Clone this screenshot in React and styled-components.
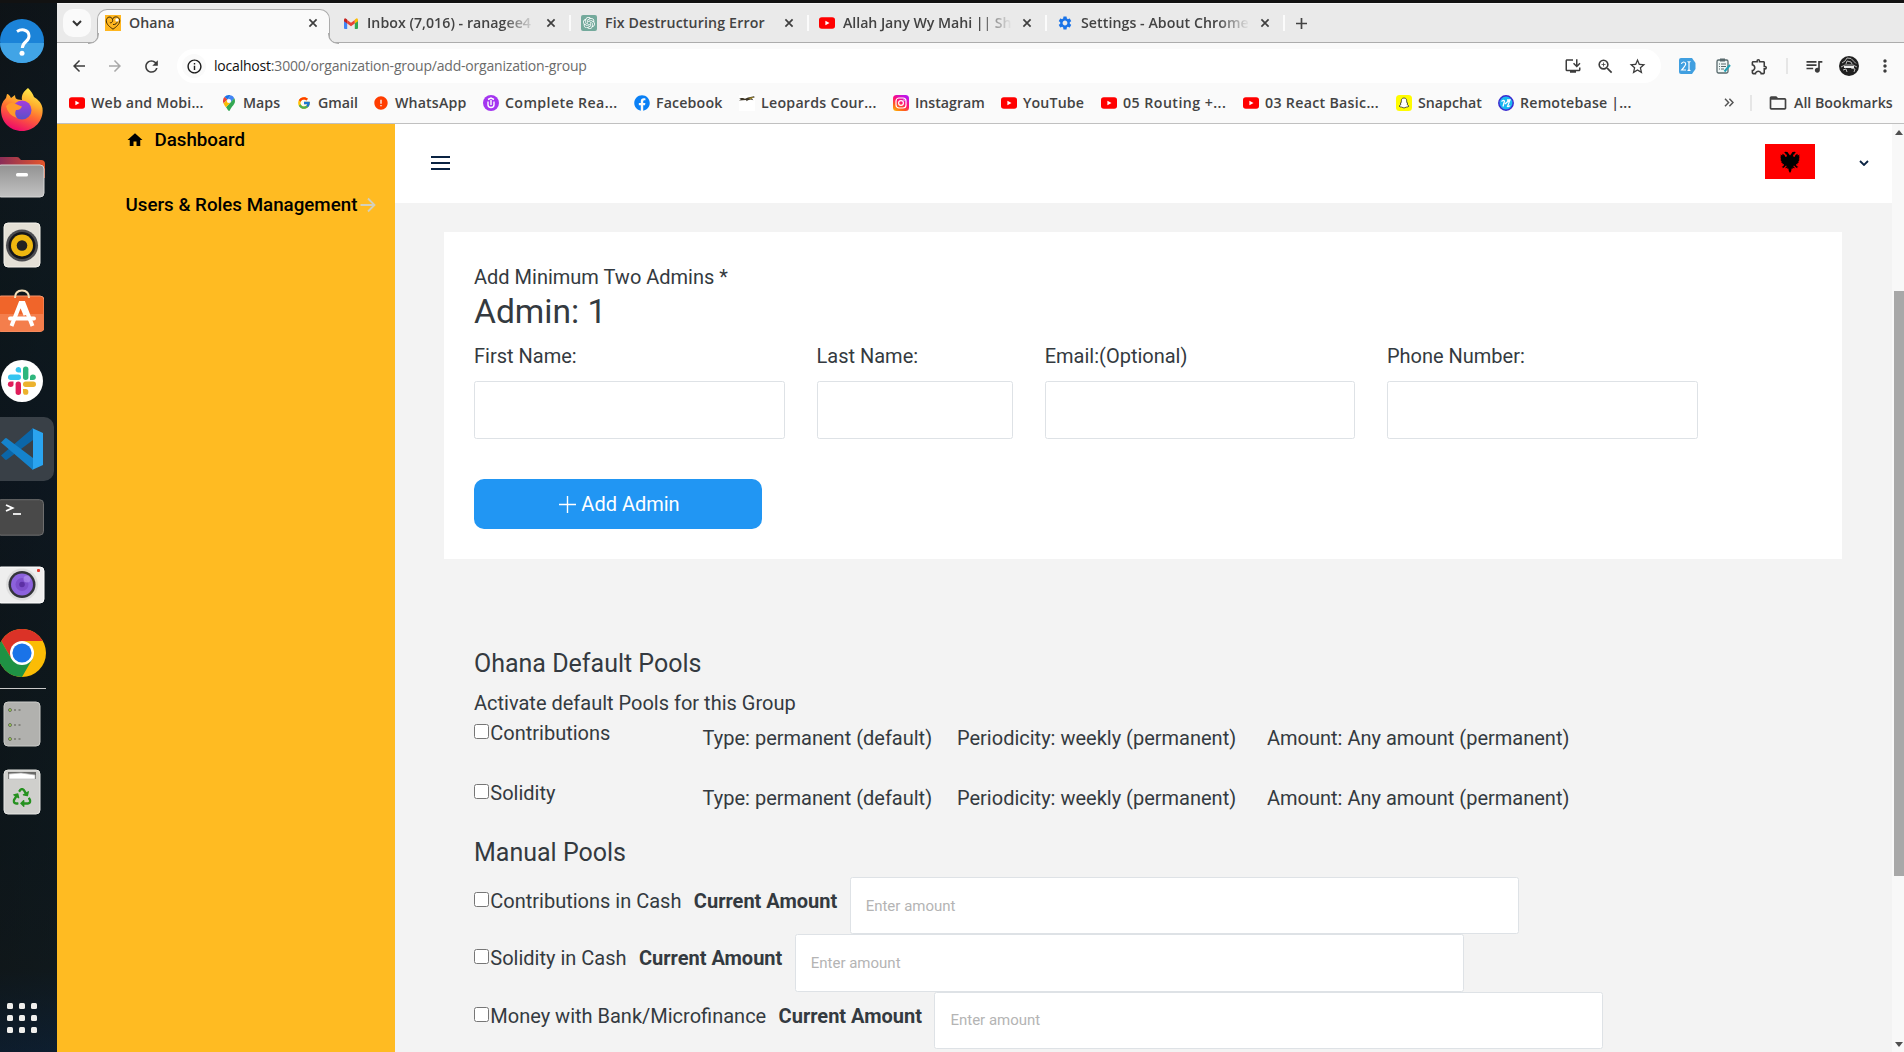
import React from "react";
import styled, { createGlobalStyle } from "styled-components";
import {
  MdArrowBack, MdArrowForward, MdRefresh, MdInfoOutline, MdStarBorder, MdOutlineExtension, MdQueueMusic,
  MdMoreVert, MdOutlineInstallDesktop, MdZoomIn, MdFolderOpen, MdSettings, MdHome, MdError,
} from "react-icons/md";
import { FcGoogle } from "react-icons/fc";
import { SiOpenai } from "react-icons/si";
import { FaFacebook, FaRecycle } from "react-icons/fa";

const ui = `"Open Sans", "Noto Sans", sans-serif`;
const app = `Roboto, "Liberation Sans", sans-serif`;

const Global = createGlobalStyle`
  * { box-sizing: border-box; }
  body { margin: 0; overflow: hidden; background: #0e0e0e; }
  svg { display: block; flex: none; }
`;

/* ---------- desktop ---------- */
const Desktop = styled.div`
  width: 1904px;
  height: 1052px;
  padding-top: 3px;
  display: flex;
  overflow: hidden;
  background: #121212;
`;
const Dock = styled.nav`
  width: 57px;
  flex: none;
  padding-top: 4px;
  display: flex;
  flex-direction: column;
  background: linear-gradient(100deg, rgba(14, 16, 18, 0.55), rgba(16, 30, 40, 0.45)),
    linear-gradient(180deg, #0d161c 0, #0f1d26 14%, #0b1a20 30%, #0b1622 45%, #0c1518 62%, #0c1416 80%, #101514 92%, #0c1f36 100%);
`;
const DockSlot = styled.div`
  width: 54px;
  height: 68px;
  display: flex;
  align-items: center;
`;
const DockTile = styled.div`
  width: 54px;
  height: 64px;
  display: flex;
  align-items: center;
  border-radius: 0 10px 10px 0;
  background: ${(p) => (p.$active ? "#394047" : "transparent")};
`;
const DockLine = styled.div`
  width: 46px;
  height: 1px;
  margin: 1px 0;
  background: #c9c9c9;
`;
const AppsGrid = styled.div`
  margin: auto 0 19px 7px;
  display: grid;
  grid-template-columns: repeat(3, 6px);
  grid-auto-rows: 6px;
  gap: 6px;
`;
const AppsDot = styled.i`
  border-radius: 1.5px;
  background: #f0efec;
`;

/* ---------- browser chrome ---------- */
const Browser = styled.div`
  flex: 1;
  min-width: 0;
  display: flex;
  flex-direction: column;
  background: #fafafa;
  color: #434343;
  font: 600 14.2px/20px ${ui};
`;
const TabStrip = styled.div`
  height: 40px;
  flex: none;
  padding-left: 6px;
  display: flex;
  background: #eaeaea;
  border-bottom: 1px solid #acacac;
  border-top: 1px solid #f4f4f4;
`;
const TabSearch = styled.div`
  width: 28px;
  height: 28px;
  margin: 5px 3px 0 0;
  display: grid;
  place-items: center;
  border-radius: 10px;
  background: #fafafa;
`;
const Tab = styled.div`
  position: relative;
  width: 238px;
  height: 32px;
  margin-top: 3px;
  padding: 0 14px 0 11px;
  display: flex;
  align-items: center;
  gap: 8px;
`;
const TabBody = styled.div`
  position: absolute;
  inset: 2px 2px -5px 3px;
  border: 1px solid #acacac;
  border-bottom: none;
  border-radius: 10px 10px 0 0;
  background: #fafafa;
  &::before,
  &::after {
    content: "";
    position: absolute;
    bottom: 0;
    width: 10px;
    height: 10px;
    border-bottom: 1px solid #acacac;
  }
  &::before {
    left: -10px;
    border-right: 1px solid #acacac;
    border-bottom-right-radius: 10px;
    box-shadow: 3px 3px 0 0 #fafafa;
    clip-path: inset(0);
  }
  &::after {
    right: -10px;
    border-left: 1px solid #acacac;
    border-bottom-left-radius: 10px;
    box-shadow: -3px 3px 0 0 #fafafa;
    clip-path: inset(0);
  }
`;
const TabIcon = styled.div`
  position: relative;
  width: 16px;
  display: grid;
  place-items: center;
`;
const TabTitle = styled.div`
  position: relative;
  width: 168px;
  overflow: hidden;
  white-space: nowrap;
  letter-spacing: ${(p) => p.$ls || 0}px;
  ${(p) => p.$fade && "mask-image: linear-gradient(90deg, #000 136px, transparent 169px);"}
`;
const TabClose = styled.div`
  position: relative;
  margin-left: auto;
`;
const TabRule = styled.i`
  position: absolute;
  right: -1px;
  top: 8px;
  width: 2px;
  height: 16px;
  background: #fbfbfb;
`;
const NewTab = styled.div`
  width: 34px;
  height: 38px;
  display: grid;
  place-items: center;
`;
const Toolbar = styled.div`
  height: 46px;
  flex: none;
  display: flex;
  align-items: center;
  padding: 0 3px 0 12px;
  color: #3c3c3c;
`;
const ToolButton = styled.div`
  width: ${(p) => p.$w || 36}px;
  flex: none;
  display: grid;
  place-items: center;
  color: ${(p) => p.$color || "inherit"};
`;
const Omnibox = styled.div`
  width: 1484px;
  height: 34px;
  flex: none;
  display: flex;
  align-items: center;
  padding: 0 8px 0 5px;
  border-radius: 17px;
  background: #fff;
`;
const SiteInfo = styled.div`
  width: 24px;
  height: 24px;
  display: grid;
  place-items: center;
  border-radius: 12px;
  background: #fafafa;
  color: #1b1b1b;
`;
const Url = styled.div`
  flex: 1;
  padding-left: 8px;
  color: #6b6b6b;
  font: 400 14px/20px ${ui};
  letter-spacing: -0.2px;
  b { font-weight: 400; color: #111; }
`;
const ToolRule = styled.i`
  width: 2px;
  height: 16px;
  flex: none;
  background: #e6e6e6;
`;
const Avatar = styled.div`
  width: 20px;
  height: 20px;
  flex: none;
  margin-right: 10px;
  overflow: hidden;
  border-radius: 50%;
  background: #202020;
`;
const Bookmarks = styled.div`
  height: 35px;
  flex: none;
  padding: 0 11px 7px 12px;
  display: flex;
  align-items: center;
  gap: 17px;
  border-bottom: 1px solid #c0c0c0;
`;
const Bookmark = styled.div`
  display: flex;
  align-items: center;
  gap: 6px;
`;
const BookmarkIcon = styled.div`
  width: 16px;
  height: 16px;
  display: grid;
  place-items: center;
`;
const BookmarkText = styled.div`
  width: ${(p) => p.$w}px;
  white-space: nowrap;
  letter-spacing: ${(p) => p.$ls || 0}px;
`;
const BookmarkEnd = styled.div`
  margin-left: auto;
  display: flex;
  align-items: center;
`;

/* ---------- web page ---------- */
const Page = styled.div`
  flex: 1;
  min-height: 0;
  display: flex;
  overflow: hidden;
  background: #f3f3f3;
  color: #343a40;
  font: 400 20px/30px ${app};
`;
const Sidebar = styled.aside`
  width: 338px;
  flex: none;
  display: flex;
  flex-direction: column;
  background: #ffbb22;
  color: #000;
  font-weight: 500;
  font-size: 18.75px;
  line-height: 22px;
`;
const SideItem = styled.div`
  display: flex;
  align-items: center;
  white-space: nowrap;
  padding-left: ${(p) => p.$left}px;
  margin-top: ${(p) => p.$top}px;
  gap: ${(p) => p.$gap}px;
`;
const Main = styled.main`
  flex: 1;
  min-width: 0;
  display: flex;
  flex-direction: column;
`;
const Header = styled.header`
  height: 79px;
  flex: none;
  padding: 0 23px 2px 36px;
  display: flex;
  align-items: center;
  background: #fff;
`;
const Burger = styled.div`
  width: 19px;
  display: grid;
  grid-auto-rows: 2px;
  gap: 4px;
`;
const BurgerLine = styled.i`
  background: #0a2342;
`;
const Flag = styled.div`
  width: 50px;
  height: 35px;
  margin: 0 44px 2px auto;
  display: grid;
  place-items: center;
  background: #f00;
  color: #000;
`;
const Card = styled.section`
  width: 1398px;
  height: 327px;
  flex: none;
  margin: 29px 0 0 49px;
  padding: 30px;
  background: #fff;
`;
const AdminTitle = styled.h2`
  margin: 0 0 10px;
  font-weight: 400;
  font-size: 33.6px;
  line-height: 39px;
`;
const Fields = styled.div`
  display: flex;
  gap: 31.5px;
`;
const Field = styled.label`
  width: ${(p) => p.$w}px;
  display: flex;
  flex-direction: column;
  gap: 10px;
  white-space: nowrap;
`;
const Input = styled.input`
  width: ${(p) => (p.$w ? p.$w + "px" : "100%")};
  height: ${(p) => (p.$w ? 57.3 : 58)}px;
  padding: 0 15px;
  border: 1px solid #dee2e6;
  border-radius: 2.5px;
  background: #fff;
  font: 400 15px/22px ${app};
  &::placeholder { color: #b4b4b4; opacity: 1; }
`;
const AddButton = styled.button`
  width: 288px;
  height: 50px;
  margin-top: 40px;
  padding: 0 0 0 3px;
  display: flex;
  align-items: center;
  justify-content: center;
  gap: 5px;
  border: none;
  border-radius: 10px;
  background: #2196f3;
  color: #fff;
  font: 400 20px/30px ${app};
`;
const Pools = styled.section`
  padding: 90px 0 0 79px;
`;
const PoolsTitle = styled.h4`
  margin: 0 0 9px;
  font-weight: 400;
  font-size: 25px;
  line-height: 30px;
`;
const PoolRow = styled.div`
  height: 60px;
  display: grid;
  grid-template-columns: 228.6px 254.4px 310px auto;
  align-items: start;
`;
const Check = styled.label`
  display: flex;
  align-items: flex-start;
  gap: 1.3px;
  white-space: nowrap;
  padding-top: ${(p) => p.$top || 0}px;
`;
const Box = styled.input`
  width: 15px;
  height: 15px;
  margin: 6px 0 0;
`;
const PoolInfo = styled.div`
  padding-top: 5px;
  white-space: nowrap;
`;
const ManualRow = styled.div`
  height: 57.3px;
  display: flex;
  gap: 12.4px;
`;
const Current = styled.b`
  padding-top: 9px;
  font-weight: 700;
  white-space: nowrap;
`;
const Scrollbar = styled.div`
  width: 12px;
  flex: none;
  display: flex;
  flex-direction: column;
  align-items: flex-end;
  background: #f8f8f8;
`;
const ScrollArrow = styled.div`
  width: 10px;
  height: 16px;
  display: grid;
  place-items: center;
`;
const Thumb = styled.div`
  width: 10px;
  height: 585px;
  margin: 151px 0 auto;
  background: #a8a8a8;
`;

/* ---------- small drawings ---------- */
const Cross = () => (
  <svg width="10" height="10" viewBox="0 0 10 10" stroke="#3f3f3f" strokeWidth="1.7"><path d="M1.4 1.4l7.2 7.2M8.6 1.4L1.4 8.6" /></svg>
);
const Plus = ({ size, weight }) => (
  <svg width={size} height={size} viewBox="0 0 17 17" stroke="currentColor" strokeWidth={weight}><path d="M8.500 0v17M0 8.500h17" /></svg>
);
const Eagle = () => (
  <svg width="20" height="22" viewBox="0 0 20 22">
    {["", "translate(20 0) scale(-1 1)"].map((t) => (
      <path key={t} transform={t} d="M10 4.500L8.500 2.500 7.500 1 5 .8l-.8 1 1.600.4-1 .8 1.700.5.5 1.700L5.500 6 4.500 4 2.500 2.800 2.300 4.500.3 3.500l.9 2-1.200.3 1.200 1.400L.2 8l1.200 1-.9.8 1.400.9-.8 1 1.600.3-.4 1.300 1.600-.4L3.500 15l-2 1 1.400.3-.4 1 1.500-.7L6 14.500l.8.800-1.300 1 .2 1.200 1.500-1 .3 1.500.9-.5.4 2.500L10 22z" fill="#000" />
    ))}
  </svg>
);
const YouTube = () => (
  <svg width="16" height="16" viewBox="0 0 16 16"><rect y="2.2" width="16" height="11.6" rx="2.8" fill="#f00" /><path d="M6.400 5.700v4.600L10.500 8z" fill="#fff" /></svg>
);
const Ohana = () => (
  <svg width="16" height="16" viewBox="0 0 16 16" fill="none" stroke="#2b1c05">
    <rect width="16" height="16" fill="#ffb61f" stroke="none" />
    <path d="M8 14.200C5 12 1.300 9.500 1.300 5.700c0-4 5-5.200 6.200-1.200.7 2.300-1.300 4-2.600 3M7.500 4.500c1-4 7.200-3.300 7.200 1.200 0 3.800-3.700 6.300-6.700 8.500M8 9.500c2.500.4 4.500-1.300 4.300-4" strokeWidth="0.9" />
    <circle cx="12" cy="5" r="1.700" fill="#fff" stroke="none" />
  </svg>
);
const GmailIcon = () => (
  <svg width="14" height="11" viewBox="0 0 14 11">
    <path d="M0 2v8q0 1 1 1h2.200V4z" fill="#4285f4" /><path d="M14 2v8q0 1-1 1h-2.200V4z" fill="#34a853" />
    <path d="M3.200 2v3.500L7 8.300l3.800-2.800V2L7 4.800z" fill="#ea4335" /><path d="M0 2Q0 0 1.700.4L3.200 1.500v4L0 3.200z" fill="#c5221f" /><path d="M14 2q0-2-1.700-1.600l-1.500 1.100v4L14 3.200z" fill="#fbbc04" />
  </svg>
);
const Pin = () => (
  <svg width="12" height="16" viewBox="0 0 12 16">
    <path d="M6 0a6 6 0 0 0-4.600 2.100l3 2.500L7.800.3Q7 0 6 0" fill="#1a73e8" /><path d="M1.400 2.100A6 6 0 0 0 .6 8.400L4.400 4.600z" fill="#ea4335" />
    <path d="M7.800.3L4.400 4.600a2.300 2.300 0 0 0 3.300 3L11.300 3.200A6 6 0 0 0 7.800.3" fill="#4285f4" />
    <path d="M11.300 3.200L3 12.300C4.500 14 5 16 6 16s1-2 3-4.300 3-3.500 3-5.700q0-1.500-.7-2.800" fill="#34a853" /><path d="M.6 8.400Q1.500 10.500 3 12.300l4.700-4.700a2.300 2.300 0 0 1-3.300-3z" fill="#fbbc04" />
    <circle cx="6" cy="6" r="2.100" fill="#fff" />
  </svg>
);
const Udemy = () => (
  <svg width="16" height="16" viewBox="0 0 16 16"><circle cx="8" cy="8" r="8" fill="#a435f0" /><path d="M5 6.500v3.300q0 2.700 3 2.700t3-2.700V6.500M8 10V5M5 4.500L8 3l3 1.500" fill="none" stroke="#fff" strokeWidth="1.400" /></svg>
);
const Leopard = () => (
  <svg width="16" height="16" viewBox="0 0 16 16"><path fill="#fff" d="M0 0h16v16H0z" /><path d="M0 3h4l2 .8L9 2.500l6-1.200.8 1-3 1 1.500 2-2.500-.8-3 .8-1 1L7 5 0 5.500 2 4z" fill="#3c3425" /><path d="M9 3l6-1-3 2z" fill="#b49a2c" /></svg>
);
const Insta = () => (
  <svg width="16" height="16" viewBox="0 0 16 16">
    <defs><linearGradient id="ig" x1="0" y1="1" x2=".6" y2="0"><stop offset="0" stopColor="#ffc400" /><stop offset=".35" stopColor="#ff5a1f" /><stop offset=".65" stopColor="#ff0f7b" /><stop offset="1" stopColor="#c013e8" /></linearGradient></defs>
    <rect width="16" height="16" rx="3.500" fill="url(#ig)" /><rect x="3" y="3" width="10" height="10" rx="3" fill="none" stroke="#fff" strokeWidth="1.200" /><circle cx="8" cy="8" r="2.400" fill="none" stroke="#fff" strokeWidth="1.200" /><circle cx="11" cy="5" r=".7" fill="#fff" />
  </svg>
);
const Snap = () => (
  <svg width="16" height="16" viewBox="0 0 16 16"><rect width="16" height="16" rx="3.500" fill="#fffc00" /><path d="M8 3C6 3 5.200 4.400 5.300 6v1.500L4 8.200l1 .7Q4.500 10.500 3 11l1 .9 1.600.2L8 13l2.400-.9 1.600-.2 1-.9q-1.500-.5-2-2.100l1-.7-1.300-.7V6C10.800 4.400 10 3 8 3z" fill="#fff" stroke="#333" strokeWidth=".8" /></svg>
);
const Remotebase = () => (
  <svg width="16" height="16" viewBox="0 0 16 16" fill="none"><circle cx="8" cy="8" r="7.200" fill="#18b8f0" stroke="#3b2bd0" strokeWidth="1.500" /><path d="M3.500 6.500Q5.500 4.500 6.500 6L5 11.500M7 9l5-4.500M9 5h3l-2.500 6.500q1.500.5 2.500-1" stroke="#fff" strokeWidth="1.300" /></svg>
);
const ExtText = () => (
  <svg width="17" height="16" viewBox="0 0 17 16"><path d="M2 0h11l3.500 5v6L13 16H2q-2 0-2-2V2q0-2 2-2z" fill="#409fe0" /><path d="M2.500 6q.3-2 2.200-2t2 2q0 1.300-4 6h4.300M8.500 3.500q1.500 0 1.500 1v7q0 1-1.500 1M11.500 3.500q-1.500 0-1.500 1v7q0 1 1.500 1" fill="none" stroke="#fff" strokeWidth="1.200" /></svg>
);
const ExtList = () => (
  <svg width="15" height="16" viewBox="0 0 15 16" fill="none"><rect x="1" y="2" width="11" height="13" rx="1.500" fill="#eef6f5" stroke="#58696c" strokeWidth="1.300" /><rect x="4" y=".5" width="5" height="3" fill="#58696c" /><path d="M3 6h1M5 6h5M3 8.500h1M5 8.500h5M3 11h1M5 11h3" stroke="#58696c" /><path d="M14 7l-5.500 6.500" stroke="#1fa0b4" strokeWidth="2" /></svg>
);
const Face = () => (
  <svg width="20" height="20" viewBox="0 0 20 20" stroke="#b9b9b9" fill="none"><path d="M3 7l3-2 2-3 4 .5 3 3 2 2M2 11l4-2 8 0 4 2M7 8l1-3 4 1 1 2M4 14l3-1 1 3M12 12l4 1-1 3" strokeWidth="1" /><path d="M5 10h10v2H5z" fill="#eee" stroke="none" /></svg>
);

const HelpIcon = () => (
  <svg width="44" height="44" viewBox="0 0 44 44">
    <circle cx="22" cy="22" r="22" fill="#1b83d8" /><path d="M0 24a22 20 0 0 0 44 0z" fill="#41a4e6" />
    <path d="M17 12.500q3.500-2.200 7-1.500 5 1.200 5 6 0 3-3 5.500-3.500 3-3.700 6.500" fill="none" stroke="#fff" strokeWidth="3" /><circle cx="22" cy="34.300" r="2.500" fill="#fff" />
  </svg>
);
const FirefoxIcon = () => (
  <svg width="44" height="44" viewBox="0 0 44 44">
    <defs><linearGradient id="ff" x1=".8" y1="0" x2=".4" y2="1"><stop offset="0" stopColor="#fff44f" /><stop offset=".35" stopColor="#ffb02e" /><stop offset=".6" stopColor="#ff6a33" /><stop offset="1" stopColor="#ef0a6a" /></linearGradient>
      <linearGradient id="fp" x1="0" y1="0" x2="0" y2="1"><stop offset="0" stopColor="#a33de0" /><stop offset="1" stopColor="#5a50c8" /></linearGradient></defs>
    <path d="M28 1c3 3 5 6 6 9q7 4 8.500 11C44 34 34 44 22 44S1 35 1 23q0-7 5-12l1-4q2 0 4 4l4-3q0 4 3 4.500l4 .5c-1-5 2-9 6-12z" fill="url(#ff)" />
    <circle cx="22" cy="23" r="9.500" fill="url(#fp)" /><path d="M6 19q4-4 8-3 4 2 8 3.500-2 4-6 3.500-2 4 1 8-9-3-11-12z" fill="#ff9a2a" />
  </svg>
);
const FilesIcon = () => (
  <svg width="45" height="42" viewBox="0 0 45 42">
    <defs><linearGradient id="fo" x1="0" y1="0" x2="1" y2="0"><stop offset="0" stopColor="#8a2d58" /><stop offset="1" stopColor="#e5562b" /></linearGradient><linearGradient id="fg" x1="0" y1="0" x2="0" y2="1"><stop offset="0" stopColor="#929292" /><stop offset="1" stopColor="#c2c2c2" /></linearGradient></defs>
    <path d="M0 1h17q2 0 3 2l1 1h20q4 0 4 4v14H0z" fill="url(#fo)" /><rect x="-3" y="9" width="47" height="32" rx="4" fill="url(#fg)" stroke="#d6d6d6" /><rect x="16" y="17" width="12" height="3.500" rx="1.500" fill="#fff" />
  </svg>
);
const SpeakerIcon = () => (
  <svg width="44" height="46" viewBox="0 0 44 46"><rect x="4" y="1" width="36" height="44" rx="4" fill="#e4e0d6" stroke="#f6f3ec" /><circle cx="22" cy="23.500" r="16" fill="#4c4c50" /><circle cx="22" cy="23.500" r="13.500" fill="#15161c" /><circle cx="22" cy="23.500" r="11" fill="#efb710" /><circle cx="22" cy="23.500" r="5.300" fill="#222" /></svg>
);
const StoreIcon = () => (
  <svg width="44" height="48" viewBox="0 0 44 48"><rect x="-3" y="7" width="47" height="35.500" rx="4" fill="#f0652a" stroke="#f6966c" /><path d="M0 25h44v13.500q0 4-4 4H0z" fill="#f47e4c" /><path d="M15 9q0-7.500 7-7.500T29 9" fill="none" stroke="#f5dfb8" strokeWidth="2" /><path d="M11.500 37L20.500 14h3l9 23M20.500 14l5 12" fill="none" stroke="#fff" strokeWidth="4" /><rect x="8" y="27.500" width="28" height="4" rx="2" fill="#fff" /></svg>
);
const SlackIcon = () => (
  <svg width="44" height="44" viewBox="0 0 44 44"><circle cx="22" cy="22" r="21" fill="#fff" />
    <g><rect x="8" y="15.500" width="13" height="5.400" rx="2.700" fill="#36c5f0" /><path d="M21 13.500h-3a2.700 2.700 0 1 1 3-2.700z" fill="#36c5f0" />
      <rect x="23" y="7.500" width="5.400" height="13.400" rx="2.700" fill="#2eb67d" /><path d="M30 20.900v-2.700a2.900 2.700 0 1 1 2.900 2.700z" fill="#2eb67d" />
      <rect x="23" y="22.500" width="13" height="5.400" rx="2.700" fill="#ecb22e" /><path d="M23 30h2.700a2.700 2.900 0 1 1-2.700 2.900z" fill="#ecb22e" />
      <rect x="15.600" y="22.500" width="5.400" height="13.400" rx="2.700" fill="#e01e5a" /><path d="M13.500 22.500v2.700a2.800 2.700 0 1 1-2.800-2.700z" fill="#e01e5a" /></g></svg>
);
const CodeIcon = () => (
  <svg width="44" height="44" viewBox="0 0 44 44"><path d="M1 28.500l4 4q1 .8 2 0L33 13V1z" fill="#0b66a8" /><path d="M1 15.500l4-4q1-.8 2 0L33 31v12z" fill="#1583cc" /><path d="M32 1l11 5v32l-11 5q1 0 1-2V3q0-2-1-2z" fill="#2aa4f0" /></svg>
);
const TerminalIcon = () => (
  <svg width="44" height="37" viewBox="0 0 44 37"><rect x="-3" y=".7" width="46.500" height="35.500" rx="4" fill="#494949" stroke="#6e6e6e" /><path d="M6 6l6.500 3L6 12" fill="none" stroke="#fff" strokeWidth="1.900" /><path d="M13 15h8" stroke="#fff" strokeWidth="1.700" /></svg>
);
const CameraIcon = () => (
  <svg width="45" height="38" viewBox="0 0 45 38"><rect x="-3" y="1" width="47" height="36" rx="4" fill="#eee" stroke="#fff" /><circle cx="22" cy="18.500" r="16" fill="#dedede" /><circle cx="22" cy="18.500" r="13.500" fill="#33343b" /><circle cx="22" cy="18.500" r="11" fill="#8c62dd" /><circle cx="22" cy="18.500" r="6.500" fill="#7d4fcb" /><circle cx="22" cy="18.500" r="2.800" fill="#5c30a4" /><circle cx="27" cy="13" r="3.500" fill="#b18eee" opacity=".7" /><rect x="37" y="3" width="3" height="3" rx="1" fill="#e2352b" /></svg>
);
const ChromeIcon = () => (
  <svg width="46" height="48" viewBox="0 0 46 48"><circle cx="22" cy="24" r="24" fill="#fbbc05" /><path d="M22 12h20.800A24 24 0 0 0 1.200 12L11.600 30z" fill="#db3227" /><path d="M1.200 12A24 24 0 0 0 22 48l10.400-18H11.600z" fill="#1f9244" /><circle cx="22" cy="24" r="12" fill="#fff" /><circle cx="22" cy="24" r="9.600" fill="#1a73e8" /></svg>
);
const DriveIcon = () => (
  <svg width="44" height="46" viewBox="0 0 44 46"><rect x="4" y="1" width="36" height="44" rx="4" fill="#b1b1ae" stroke="#cbcbc8" />
    {[9, 24, 38].map((y) => (<g key={y}><circle cx="10" cy={y} r="1.500" fill="#9ddb4a" stroke="#6b6f61" /><path d={`M14 ${y}h2m2.500 0h2`} stroke="#85857f" strokeWidth="2" /></g>))}</svg>
);
const TrashIcon = () => (
  <svg width="44" height="46" viewBox="0 0 44 46"><rect x="4" y="1" width="36" height="44" rx="4" fill="#cfcfcc" stroke="#e6e6e3" /><path d="M8 3h28v7H8z" fill="#6a6a68" /><path d="M9 10V5l12-1 14 2v4z" fill="#fff" stroke="#bbb" strokeWidth=".7" />
    <svg x="12.500" y="19" width="19" height="19" viewBox="0 0 512 512"><FaRecycle size="512" color="#25911f" /></svg></svg>
);

/* ---------- data ---------- */
const dock = [[HelpIcon], [FirefoxIcon], [FilesIcon], [SpeakerIcon], [StoreIcon], [SlackIcon], [CodeIcon, true], [TerminalIcon], [CameraIcon], [ChromeIcon]];
const tabs = [
  { title: "Ohana", icon: <Ohana />, active: true },
  { title: "Inbox (7,016) - ranagee4", icon: <GmailIcon />, fade: true, rule: true, ls: 0.02 },
  { title: "Fix Destructuring Error", icon: <svg width="16" height="16" viewBox="0 0 16 16"><rect width="16" height="16" rx="2" fill="#74aa9c" /><svg x="2" y="2" width="12" height="12"><SiOpenai size={12} color="#fff" /></svg></svg>, rule: true, ls: 0.14 },
  { title: "Allah Jany Wy Mahi || Sh", icon: <YouTube />, fade: true, rule: true, ls: -0.05 },
  { title: "Settings - About Chrome", icon: <MdSettings size={16} color="#1a73e8" />, fade: true, rule: true, ls: 0.05 },
];
const bookmarks = [
  [<YouTube />, "Web and Mobi...", 113, 0.17], [<Pin />, "Maps", 36], [<FcGoogle size={14} />, "Gmail", 38], [<MdError size={16} color="#ff3d00" />, "WhatsApp", 71, 0.15],
  [<Udemy />, "Complete Rea...", 112, 0.38], [<FaFacebook size={16} color="#0a80f5" />, "Facebook", 66, 0.15], [<Leopard />, "Leopards Cour...", 115, 0.25], [<Insta />, "Instagram", 69],
  [<YouTube />, "YouTube", 61, 0.15], [<YouTube />, "05 Routing +...", 103, 0.45], [<YouTube />, "03 React Basic...", 114, 0.3], [<Snap />, "Snapchat", 63], [<Remotebase />, "Remotebase |...", 112, 0.2],
];
const fields = [["First Name:", 311], ["Last Name:", 196.7], ["Email:(Optional)", 310.7], ["Phone Number:", 311]];
const pools = ["Contributions", "Solidity"];
const manual = ["Contributions in Cash", "Solidity in Cash", "Money with Bank/Microfinance"];

export default function App() {
  return (
    <Desktop>
      <Global />
      <Dock>
        {dock.map(([Icon, active], i) => (
          <DockSlot key={i}><DockTile $active={active}><Icon /></DockTile></DockSlot>
        ))}
        <DockLine />
        <DockSlot><DriveIcon /></DockSlot>
        <DockSlot><TrashIcon /></DockSlot>
        <AppsGrid>{Array.from({ length: 9 }, (_, i) => <AppsDot key={i} />)}</AppsGrid>
      </Dock>
      <Browser>
        <TabStrip>
          <TabSearch><svg width="10" height="7" viewBox="0 0 10 7" fill="none" stroke="#333" strokeWidth="2"><path d="M1 1l4 4 4-4" /></svg></TabSearch>
          {tabs.map((t) => (
            <Tab key={t.title}>
              {t.active && <TabBody />}
              <TabIcon>{t.icon}</TabIcon>
              <TabTitle $fade={t.fade} $ls={t.ls}>{t.title}</TabTitle>
              <TabClose><Cross /></TabClose>
              {t.rule && <TabRule />}
            </Tab>
          ))}
          <NewTab><Plus size={11} weight={2.6} /></NewTab>
        </TabStrip>
        <Toolbar>
          <ToolButton $w={20}><MdArrowBack size={18} /></ToolButton>
          <ToolButton $w={52} $color="#a8a8a8"><MdArrowForward size={18} /></ToolButton>
          <ToolButton $w={20}><MdRefresh size={19} /></ToolButton>
          <ToolButton $w={16} />
          <Omnibox>
            <SiteInfo><MdInfoOutline size={17} /></SiteInfo>
            <Url><b>localhost</b>:3000/organization-group/add-organization-group</Url>
            <ToolButton $w={32}><MdOutlineInstallDesktop size={18} /></ToolButton>
            <ToolButton $w={32}><MdZoomIn size={19} /></ToolButton>
            <ToolButton $w={32}><MdStarBorder size={19} /></ToolButton>
          </Omnibox>
          <ToolButton $w={53}><ExtText /></ToolButton>
          <ToolButton $w={19}><ExtList /></ToolButton>
          <ToolButton $w={53}><MdOutlineExtension size={19} /></ToolButton>
          <ToolRule />
          <ToolButton $w={51}><MdQueueMusic size={20} /></ToolButton>
          <Avatar><Face /></Avatar>
          <ToolButton $w={32}><MdMoreVert size={20} /></ToolButton>
        </Toolbar>
        <Bookmarks>
          {bookmarks.map(([icon, text, w, ls], i) => (
            <Bookmark key={i}><BookmarkIcon>{icon}</BookmarkIcon><BookmarkText $w={w} $ls={ls}>{text}</BookmarkText></Bookmark>
          ))}
          <BookmarkEnd>
            <svg width="10" height="9" viewBox="0 0 10 9" fill="none" stroke="#555" strokeWidth="1.500"><path d="M1 .7l3.600 3.800L1 8.300M5.400.7L9 4.500 5.400 8.300" /></svg>
            <ToolButton $w={34}><ToolRule /></ToolButton>
            <Bookmark><MdFolderOpen size={20} /><BookmarkText $w={99}>All Bookmarks</BookmarkText></Bookmark>
          </BookmarkEnd>
        </Bookmarks>
        <Page>
          <Sidebar>
            <SideItem $left={69} $top={5} $gap={10.4}><MdHome size={18} />Dashboard</SideItem>
            <SideItem $left={68.5} $top={43} $gap={3}>Users &amp; Roles Management
              <svg width="16" height="16" viewBox="0 0 16 16" fill="none" stroke="#d3d0bd" strokeWidth="1.800"><path d="M.500 8H14M8 1.500L14.500 8 8 14.500" /></svg>
            </SideItem>
          </Sidebar>
          <Main>
            <Header>
              <Burger><BurgerLine /><BurgerLine /><BurgerLine /></Burger>
              <Flag><Eagle /></Flag>
              <svg width="10" height="6" viewBox="0 0 10 6" fill="none" stroke="#0a2342" strokeWidth="1.800"><path d="M1 1l4 4 4-4" /></svg>
            </Header>
            <Card>
              <div>Add Minimum Two Admins *</div>
              <AdminTitle>Admin: 1</AdminTitle>
              <Fields>
                {fields.map(([label, w]) => (<Field key={label} $w={w}>{label}<Input /></Field>))}
              </Fields>
              <AddButton><Plus size={17} weight={1.4} />Add Admin</AddButton>
            </Card>
            <Pools>
              <PoolsTitle>Ohana Default Pools</PoolsTitle>
              <div>Activate default Pools for this Group</div>
              {pools.map((name) => (
                <PoolRow key={name}>
                  <Check><Box type="checkbox" />{name}</Check>
                  <PoolInfo>Type: permanent (default)</PoolInfo>
                  <PoolInfo>Periodicity: weekly (permanent)</PoolInfo>
                  <PoolInfo>Amount: Any amount (permanent)</PoolInfo>
                </PoolRow>
              ))}
              <PoolsTitle>Manual Pools</PoolsTitle>
              {manual.map((name) => (
                <ManualRow key={name}>
                  <Check $top={9}><Box type="checkbox" />{name}</Check>
                  <Current>Current Amount</Current>
                  <Input $w={669} placeholder="Enter amount" />
                </ManualRow>
              ))}
            </Pools>
          </Main>
          <Scrollbar>
            <ScrollArrow><svg width="8" height="5"><path d="M0 5l4-5 4 5z" fill="#505050" /></svg></ScrollArrow>
            <Thumb />
            <ScrollArrow><svg width="8" height="5"><path d="M0 0l4 5 4-5z" fill="#505050" /></svg></ScrollArrow>
          </Scrollbar>
        </Page>
      </Browser>
    </Desktop>
  );
}
